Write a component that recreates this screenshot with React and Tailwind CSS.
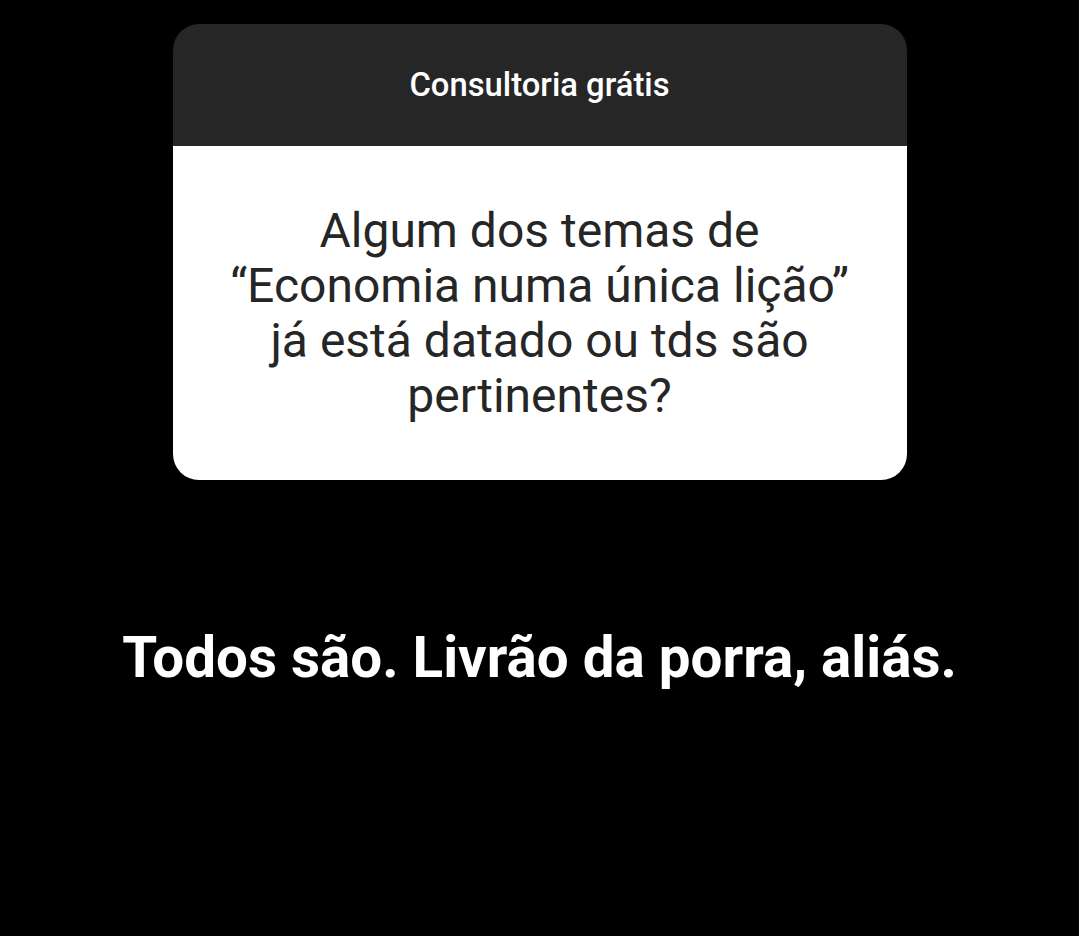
import React from 'react';

// Story screen: question sticker card with the answer underneath
function App() {
  const lines = [
    'Algum dos temas de',
    '\u201CEconomia numa única lição\u201D',
    'já está datado ou tds são',
    'pertinentes?',
  ];

  return (
    <div className="min-h-[936px] w-full bg-black flex flex-col items-center pt-[24px] font-['Roboto',sans-serif]">
      {/* Question card */}
      <div className="w-[734px] rounded-[26px] overflow-hidden">
        <div className="h-[122px] bg-[#262626] flex items-center justify-center">
          <span className="text-white text-[32.8px] font-medium leading-none">Consultoria grátis</span>
        </div>
        <div className="h-[334px] bg-white flex flex-col items-center justify-center">
          {lines.map((line) => (
            <p key={line} className="text-[#262626] text-[48px] leading-[55px] font-normal text-center">
              {line}
            </p>
          ))}
        </div>
      </div>

      {/* Answer */}
      <p className="mt-[146px] text-white text-[56.5px] leading-[64px] font-bold text-center">
        Todos são. Livrão da porra, aliás.
      </p>
    </div>
  );
}

export default App;
